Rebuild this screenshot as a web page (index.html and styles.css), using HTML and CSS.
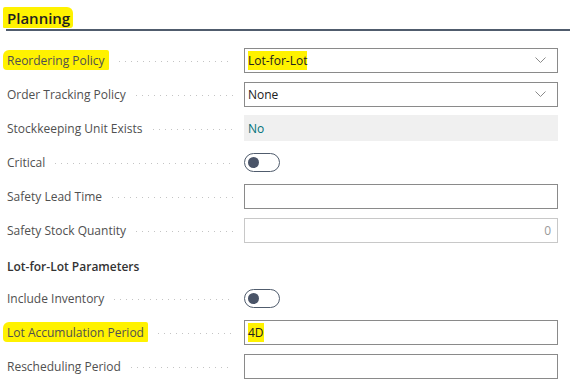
FILE: index.html
```html
<!DOCTYPE html>
<html lang="en">

<head>
    <meta charset="UTF-8">
    <meta name="viewport" content="width=device-width, initial-scale=1.0">
    <title>Planning</title>
    <link rel="stylesheet" href="styles.css">
</head>

<body>
    <div class="page">
        <!-- Section header -->
        <h2 class="section-title"><span class="hl hl-title">Planning</span></h2>

        <div class="field-row">
            <div class="caption"><span class="label"><span class="hl hl-label">Reordering Policy</span></span><span class="leader"></span></div>
            <div class="control select">
                <span class="value"><span class="hl hl-value">Lot-for-Lot</span></span>
                <svg class="chevron" width="11" height="6" viewBox="0 0 11 6"><path d="M0.5 0.5 L5.5 5.5 L10.5 0.5" fill="none" stroke="#8a8a8a" stroke-width="1"/></svg>
            </div>
        </div>

        <div class="field-row">
            <div class="caption"><span class="label">Order Tracking Policy</span><span class="leader"></span></div>
            <div class="control select">
                <span class="value">None</span>
                <svg class="chevron" width="11" height="6" viewBox="0 0 11 6"><path d="M0.5 0.5 L5.5 5.5 L10.5 0.5" fill="none" stroke="#8a8a8a" stroke-width="1"/></svg>
            </div>
        </div>

        <div class="field-row">
            <div class="caption"><span class="label">Stockkeeping Unit Exists</span><span class="leader"></span></div>
            <div class="control readonly"><span class="value link">No</span></div>
        </div>

        <div class="field-row">
            <div class="caption"><span class="label">Critical</span><span class="leader"></span></div>
            <div class="toggle"><span class="knob"></span></div>
        </div>

        <div class="field-row">
            <div class="caption"><span class="label">Safety Lead Time</span><span class="leader"></span></div>
            <div class="control"></div>
        </div>

        <div class="field-row">
            <div class="caption"><span class="label">Safety Stock Quantity</span><span class="leader"></span></div>
            <div class="control disabled"><span class="value number">0</span></div>
        </div>

        <div class="group-title">Lot-for-Lot Parameters</div>

        <div class="field-row">
            <div class="caption"><span class="label">Include Inventory</span><span class="leader"></span></div>
            <div class="toggle"><span class="knob"></span></div>
        </div>

        <div class="field-row">
            <div class="caption"><span class="label"><span class="hl hl-label">Lot Accumulation Period</span></span><span class="leader"></span></div>
            <div class="control"><span class="value"><span class="hl hl-value">4D</span></span></div>
        </div>

        <div class="field-row">
            <div class="caption"><span class="label">Rescheduling Period</span><span class="leader"></span></div>
            <div class="control"></div>
        </div>
    </div>
</body>

</html>
```

FILE: styles.css
```css
body {
    margin: 0;
    background-color: #ffffff;
    font-family: "Open Sans", "Noto Sans", sans-serif;
    font-size: 12px;
    color: #505050;
}

.page {
    padding: 0 0 0 6px;
}

.section-title {
    margin: 0;
    padding: 8px 0 0 1px;
    height: 21px;
    font-size: 15px;
    font-weight: 600;
    line-height: 20px;
    color: #212121;
    border-bottom: 2px solid #505c6d;
    margin-bottom: 12px;
}

.hl {
    background-color: #fff200;
}

.hl-title {
    padding: 1px 3px 0 4px;
    margin-left: -4px;
    border-radius: 2px 6px 3px 1px;
}

.hl-label {
    padding: 2px 4px 1px 4px;
    margin-left: -4px;
    border-radius: 6px 2px 1px 4px;
}

.hl-value {
    padding: 1px 0;
}

.field-row {
    display: flex;
    align-items: center;
    height: 34px;
}

.caption {
    display: flex;
    align-items: center;
    width: 226px;
    padding-left: 1px;
    margin-right: 11px;
}

.label {
    white-space: nowrap;
}

.leader {
    flex: 1;
    height: 1px;
    margin: 3px 0 0 10px;
    background-image: linear-gradient(to right, #c4c4c4 1px, transparent 1px);
    background-size: 6px 1px;
    background-repeat: repeat-x;
}

.control {
    box-sizing: border-box;
    width: 314px;
    height: 25px;
    border: 1px solid #8a8a8a;
    display: flex;
    align-items: center;
    padding: 0 10px 0 3px;
    color: #212121;
}

.select {
    justify-content: space-between;
}

.chevron {
    margin-right: 1px;
}

.readonly {
    border: none;
    background-color: #f0f0f0;
    height: 26px;
    padding-left: 4px;
}

.link {
    color: #00717a;
}

.disabled {
    border-color: #c8c8c8;
    justify-content: flex-end;
    padding-right: 6px;
}

.number {
    color: #9a9a9a;
}

.toggle {
    box-sizing: border-box;
    width: 36px;
    height: 19px;
    border: 1px solid #505c6d;
    border-radius: 10px;
    display: flex;
    align-items: center;
    padding-left: 3px;
}

.knob {
    width: 11px;
    height: 11px;
    border-radius: 50%;
    background-color: #4a5468;
}

.group-title {
    padding: 10px 0 0 1px;
    height: 24px;
    line-height: 20px;
    font-weight: 600;
    color: #333333;
}
```
